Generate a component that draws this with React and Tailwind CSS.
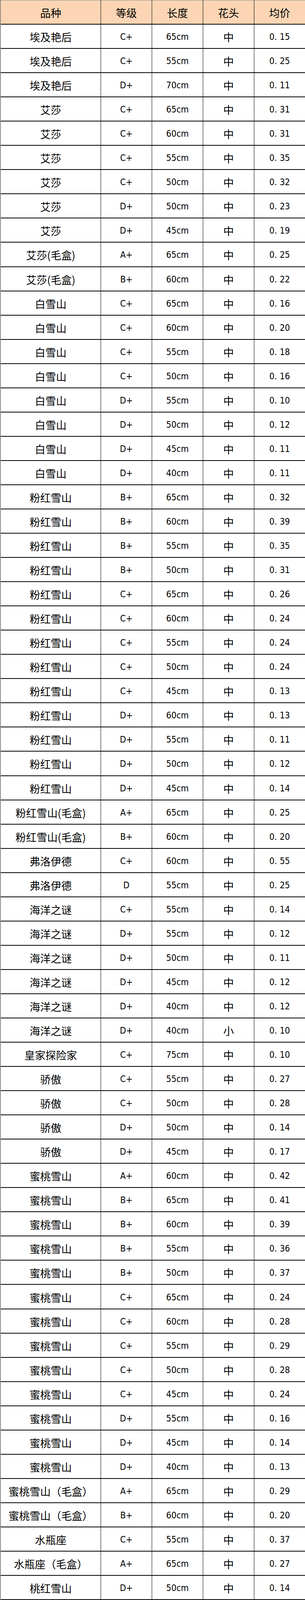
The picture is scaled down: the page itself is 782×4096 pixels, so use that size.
const rows = [
  ["埃及艳后", "C+", "65cm", "中", "0.15"],
  ["埃及艳后", "C+", "55cm", "中", "0.25"],
  ["埃及艳后", "D+", "70cm", "中", "0.11"],
  ["艾莎", "C+", "65cm", "中", "0.31"],
  ["艾莎", "C+", "60cm", "中", "0.31"],
  ["艾莎", "C+", "55cm", "中", "0.35"],
  ["艾莎", "C+", "50cm", "中", "0.32"],
  ["艾莎", "D+", "50cm", "中", "0.23"],
  ["艾莎", "D+", "45cm", "中", "0.19"],
  ["艾莎(毛盒)", "A+", "65cm", "中", "0.25"],
  ["艾莎(毛盒)", "B+", "60cm", "中", "0.22"],
  ["白雪山", "C+", "65cm", "中", "0.16"],
  ["白雪山", "C+", "60cm", "中", "0.20"],
  ["白雪山", "C+", "55cm", "中", "0.18"],
  ["白雪山", "C+", "50cm", "中", "0.16"],
  ["白雪山", "D+", "55cm", "中", "0.10"],
  ["白雪山", "D+", "50cm", "中", "0.12"],
  ["白雪山", "D+", "45cm", "中", "0.11"],
  ["白雪山", "D+", "40cm", "中", "0.11"],
  ["粉红雪山", "B+", "65cm", "中", "0.32"],
  ["粉红雪山", "B+", "60cm", "中", "0.39"],
  ["粉红雪山", "B+", "55cm", "中", "0.35"],
  ["粉红雪山", "B+", "50cm", "中", "0.31"],
  ["粉红雪山", "C+", "65cm", "中", "0.26"],
  ["粉红雪山", "C+", "60cm", "中", "0.24"],
  ["粉红雪山", "C+", "55cm", "中", "0.24"],
  ["粉红雪山", "C+", "50cm", "中", "0.24"],
  ["粉红雪山", "C+", "45cm", "中", "0.13"],
  ["粉红雪山", "D+", "60cm", "中", "0.13"],
  ["粉红雪山", "D+", "55cm", "中", "0.11"],
  ["粉红雪山", "D+", "50cm", "中", "0.12"],
  ["粉红雪山", "D+", "45cm", "中", "0.14"],
  ["粉红雪山(毛盒)", "A+", "65cm", "中", "0.25"],
  ["粉红雪山(毛盒)", "B+", "60cm", "中", "0.20"],
  ["弗洛伊德", "C+", "60cm", "中", "0.55"],
  ["弗洛伊德", "D", "55cm", "中", "0.25"],
  ["海洋之谜", "C+", "55cm", "中", "0.14"],
  ["海洋之谜", "D+", "55cm", "中", "0.12"],
  ["海洋之谜", "D+", "50cm", "中", "0.11"],
  ["海洋之谜", "D+", "45cm", "中", "0.12"],
  ["海洋之谜", "D+", "40cm", "中", "0.12"],
  ["海洋之谜", "D+", "40cm", "小", "0.10"],
  ["皇家探险家", "C+", "75cm", "中", "0.10"],
  ["骄傲", "C+", "55cm", "中", "0.27"],
  ["骄傲", "C+", "50cm", "中", "0.28"],
  ["骄傲", "D+", "50cm", "中", "0.14"],
  ["骄傲", "D+", "45cm", "中", "0.17"],
  ["蜜桃雪山", "A+", "60cm", "中", "0.42"],
  ["蜜桃雪山", "B+", "65cm", "中", "0.41"],
  ["蜜桃雪山", "B+", "60cm", "中", "0.39"],
  ["蜜桃雪山", "B+", "55cm", "中", "0.36"],
  ["蜜桃雪山", "B+", "50cm", "中", "0.37"],
  ["蜜桃雪山", "C+", "65cm", "中", "0.24"],
  ["蜜桃雪山", "C+", "60cm", "中", "0.28"],
  ["蜜桃雪山", "C+", "55cm", "中", "0.29"],
  ["蜜桃雪山", "C+", "50cm", "中", "0.28"],
  ["蜜桃雪山", "C+", "45cm", "中", "0.24"],
  ["蜜桃雪山", "D+", "55cm", "中", "0.16"],
  ["蜜桃雪山", "D+", "45cm", "中", "0.14"],
  ["蜜桃雪山", "D+", "40cm", "中", "0.13"],
  ["蜜桃雪山（毛盒）", "A+", "65cm", "中", "0.29"],
  ["蜜桃雪山（毛盒）", "B+", "60cm", "中", "0.20"],
  ["水瓶座", "C+", "55cm", "中", "0.37"],
  ["水瓶座（毛盒）", "A+", "65cm", "中", "0.27"],
  ["桃红雪山", "D+", "50cm", "中", "0.14"],
];

const headers = ["品种", "等级", "长度", "花头", "均价"];

const grid = "grid grid-cols-[257px_131px_131px_131px_131px] h-[62.06px] border-b-2 border-black";
const cell = "flex items-center justify-center pt-[3px] border-r border-black";
const cjk = "font-['Noto_Sans_CJK_SC',sans-serif] text-[27px] leading-none text-black";
const latin = "font-['DejaVu_Sans_Condensed','DejaVu_Sans',sans-serif] font-stretch-condensed text-[23px] leading-none text-black";

function Price({ value }) {
  return (
    <span className={latin}>
      {value.slice(0, 2)}
      <span className="ml-[7px]">{value.slice(2)}</span>
    </span>
  );
}

export default function App() {
  return (
    <div className="w-[782px] bg-white border-l-2 border-l-[#8a8a8a] border-t border-t-[#8a8a8a]">
      <div className={`${grid} bg-[#fcd5b4]`}>
        {headers.map((h) => (
          <div key={h} className={cell}>
            <span className={cjk}>{h}</span>
          </div>
        ))}
      </div>
      {rows.map((r, i) => (
        <div key={i} className={grid}>
          <div className={cell}>
            <span className={cjk}>{r[0]}</span>
          </div>
          <div className={cell}>
            <span className={latin}>{r[1]}</span>
          </div>
          <div className={cell}>
            <span className={latin}>{r[2]}</span>
          </div>
          <div className={cell}>
            <span className={cjk}>{r[3]}</span>
          </div>
          <div className={cell}>
            <Price value={r[4]} />
          </div>
        </div>
      ))}
    </div>
  );
}
